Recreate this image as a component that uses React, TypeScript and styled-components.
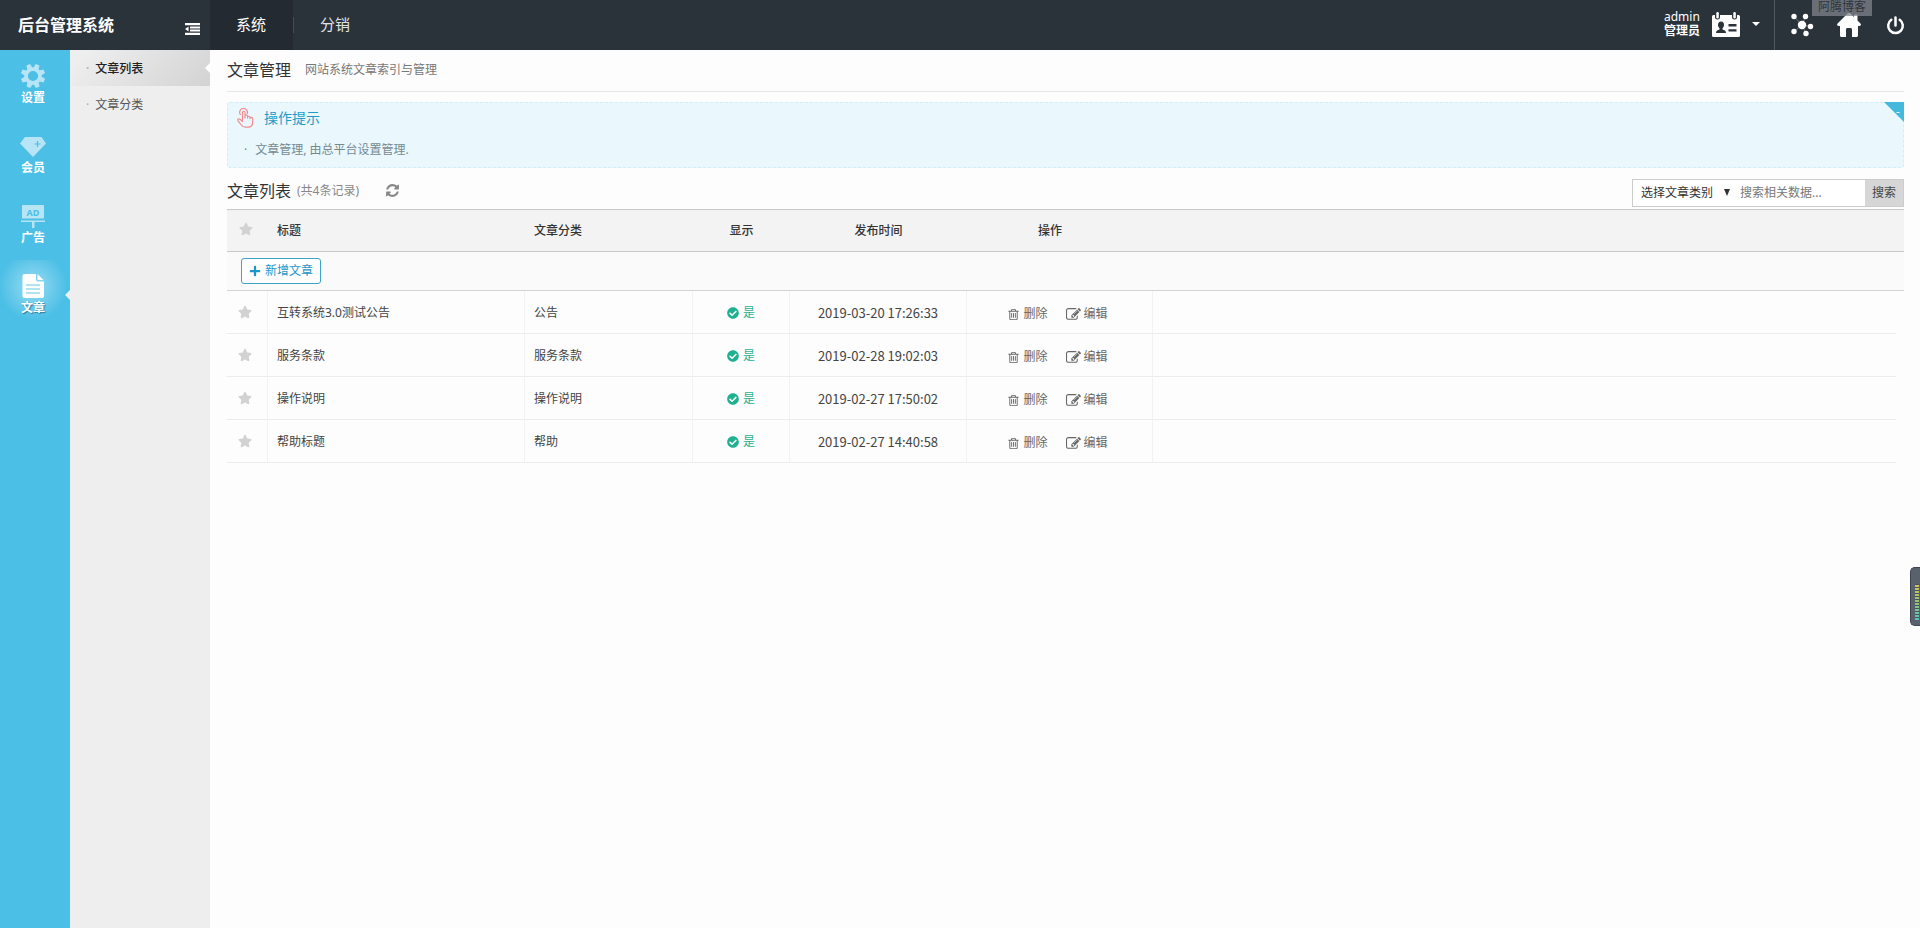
import React from 'react';
import styled, { createGlobalStyle, css } from 'styled-components';
import { FaCheckCircle, FaPlus, FaStar } from 'react-icons/fa';

const GlobalStyle = createGlobalStyle`
  * { box-sizing: border-box; }
  body {
    margin: 0;
    background: #fdfdfd;
    color: #444;
    font: 12px/20px "Noto Sans", "Noto Sans CJK SC", sans-serif;
  }
  button, input, select { font: inherit; color: inherit; margin: 0; }
  button { cursor: pointer; border: 0; background: none; padding: 0; }
  a { color: inherit; text-decoration: none; }
  h1, h2, h3, ul, p { margin: 0; padding: 0; font-weight: 400; list-style: none; }
  svg { display: block; flex: none; }
`;

const Page = styled.div`
  display: flex;
  flex-direction: column;
  min-height: 100vh;
`;

const Header = styled.header`
  display: flex;
  height: 50px;
  background: #2a323a;
  color: #fff;
`;

const Brand = styled.div`
  display: flex;
  align-items: center;
  justify-content: space-between;
  width: 210px;
  padding: 0 10px 0 18px;
`;

const BrandName = styled.h1`
  font-size: 16px;
  font-weight: 700;
  line-height: 48px;
`;

const FoldButton = styled.button`
  padding-top: 8px;
`;

const TopNav = styled.nav`
  display: flex;
  flex: 1;
`;

const TopTab = styled.a<{ $active?: boolean }>`
  display: flex;
  align-items: center;
  padding: 0 27px 2px 26px;
  font-size: 15px;
  color: ${p => (p.$active ? '#fff' : '#e2e4e6')};
  background: ${p => (p.$active ? '#232a31' : 'transparent')};
`;

const TabDivider = styled.span`
  align-self: center;
  width: 1px;
  height: 16px;
  background: #454c54;
`;

const Account = styled.button`
  display: flex;
  align-items: center;
  gap: 12px;
  padding: 0 14px 2px 0;
  border-right: 1px solid #50575f;
  text-align: left;
`;

const AccountName = styled.span`
  display: flex;
  flex-direction: column;
  line-height: 14px;
  strong { font-weight: 700; }
`;

const HeaderTools = styled.div`
  position: relative;
  display: flex;
  padding: 0 1px 0 3px;
`;

const ToolButton = styled.button`
  display: flex;
  align-items: center;
  justify-content: center;
  width: 47px;
`;

const Tooltip = styled.span`
  position: absolute;
  top: 0;
  right: 48px;
  width: 60px;
  height: 16px;
  text-align: center;
  line-height: 14px;
  color: #2f353d;
  background: rgba(128, 132, 140, 0.75);
`;

const Body = styled.div`
  display: flex;
  flex: 1;
`;

const Rail = styled.nav`
  width: 70px;
  background: #4cbfe6;
`;

const RailItem = styled.a<{ $active?: boolean }>`
  position: relative;
  display: flex;
  flex-direction: column;
  align-items: center;
  height: 70px;
  padding: 13px 4px 0 0;
  color: #fff;
  font-weight: 700;
  line-height: 18px;
  svg { opacity: 0.6; }
  ${p =>
    p.$active &&
    css`
      background: radial-gradient(circle at 33px 26px, #9adcf2 0, #4cbfe6 34px);
      svg { opacity: 1; }
      text-shadow: 1px 1px 1px #2b7d99;
      &::after {
        content: '';
        position: absolute;
        right: 0;
        top: 30px;
        border: 5px solid transparent;
        border-left: 0;
        border-right-color: #eee;
      }
    `}
`;

const SubNav = styled.nav`
  width: 140px;
  background: #eee;
`;

const SubItem = styled.a<{ $active?: boolean }>`
  position: relative;
  display: flex;
  gap: 6px;
  height: 36px;
  padding-left: 16px;
  line-height: 38px;
  color: ${p => (p.$active ? '#222' : '#555')};
  font-weight: ${p => (p.$active ? 500 : 400)};
  &::before { content: '·'; color: #aaa; }
  ${p =>
    p.$active &&
    css`
      background: linear-gradient(135deg, #eee 10%, #d4d3d4 100%);
      &::after {
        content: '';
        position: absolute;
        right: 0;
        top: 13px;
        border: 5px solid transparent;
        border-left: 0;
        border-right-color: #fff;
      }
    `}
`;

const Main = styled.main`
  flex: 1;
  min-width: 0;
  padding: 0 16px 0 17px;
`;

const TitleBar = styled.div`
  display: flex;
  align-items: center;
  gap: 14px;
  height: 42px;
  padding-bottom: 2px;
  border-bottom: 1px solid #e6e6e6;
  h2 { font-size: 16px; color: #333; line-height: 36px; }
  p { color: #777; }
`;

const Tips = styled.section`
  position: relative;
  margin-top: 10px;
  height: 66px;
  padding: 5px 8px;
  border: 1px dashed #d3ecf5;
  border-radius: 3px;
  background: #eaf7fd;
`;

const TipsTitle = styled.h3`
  display: flex;
  align-items: center;
  gap: 10px;
  font-size: 14px;
  color: #1d9cc7;
`;

const TipsList = styled.ul`
  margin-top: 12px;
  padding-left: 8px;
  color: #748a91;
  li { display: flex; gap: 8px; }
  li::before { content: '·'; }
`;

const CollapseButton = styled.button`
  position: absolute;
  top: -1px;
  right: -1px;
  width: 20px;
  height: 20px;
  padding-left: 8px;
  color: #fff;
  line-height: 8px;
  background: #45b9dd;
  clip-path: polygon(0 0, 100% 0, 100% 100%);
`;

const ListBar = styled.div`
  display: flex;
  align-items: center;
  height: 41px;
  padding-top: 4px;
`;

const ListTitle = styled.h2`
  font-size: 16px;
  color: #333;
  padding-right: 6px;
`;

const Count = styled.span`
  color: #888;
  padding-right: 26px;
`;

const IconButton = styled.button`
  color: #888;
`;

const Search = styled.form`
  display: flex;
  height: 28px;
  margin: 4px 0 0 auto;
  border: 1px solid #ccc;
  background: #fff;
`;

const SelectBox = styled.label`
  position: relative;
  display: flex;
  select {
    appearance: none;
    width: 99px;
    padding: 0 0 0 8px;
    border: 0;
    background: none;
    color: #333;
  }
  svg { position: absolute; right: 2px; top: 9px; pointer-events: none; }
`;

const SearchInput = styled.input`
  width: 133px;
  padding: 0 8px;
  border: 0;
  background: none;
  &::placeholder { color: #777; opacity: 1; }
`;

const SearchButton = styled.button`
  width: 38px;
  background: #d6d6d6;
  color: #444;
`;

const Table = styled.table`
  width: 100%;
  table-layout: fixed;
  border-collapse: separate;
  border-spacing: 0;
  border-top: 1px solid #c8c8c8;
`;

const HeadCell = styled.th<{ $center?: boolean }>`
  height: 42px;
  padding: 0 9px;
  font-weight: 500;
  color: #333;
  text-align: ${p => (p.$center ? 'center' : 'left')};
  background: #f3f3f3;
  border-bottom: 1px solid #c8c8c8;
`;

const ActionHeadCell = styled(HeadCell)`
  padding-right: 29px;
`;

const ToolbarCell = styled.td`
  height: 39px;
  padding: 0 14px;
  background: #fafafa;
  border-bottom: 1px solid #d4d4d4;
`;

const AddButton = styled.button`
  display: flex;
  align-items: center;
  gap: 4px;
  height: 26px;
  padding: 0 7px;
  border: 1px solid #3fa3c8;
  border-radius: 3px;
  background: #fff;
  color: #1d96c8;
`;

const Cell = styled.td<{ $center?: boolean; $last?: boolean }>`
  height: 43px;
  padding: 2px 9px 0;
  text-align: ${p => (p.$center ? 'center' : 'left')};
  border-bottom: 1px solid #ececec;
  border-right: ${p => (p.$last ? '0' : '1px solid #f2f2f2')};
`;

const DateCell = styled(Cell)`
  font-family: "Noto Sans CJK SC", sans-serif;
  font-size: 13px;
`;

const EdgeCell = styled.td``;

const StarWrap = styled.span`
  display: flex;
  justify-content: center;
  color: #d2d2d2;
  padding: 0 4px 3px 0;
`;

const Status = styled.span`
  display: flex;
  align-items: center;
  justify-content: center;
  gap: 4px;
  color: #1fb08f;
`;

const Actions = styled.div`
  display: flex;
  align-items: center;
  justify-content: center;
  gap: 18px;
  padding: 2px 4px 0 0;
`;

const ActionButton = styled.button`
  display: flex;
  align-items: center;
  gap: 3px;
  color: #666;
`;

const MeterWidget = styled.aside`
  position: fixed;
  right: 0;
  top: 567px;
  width: 10px;
  height: 59px;
  padding: 16px 1px 5px 4px;
  border: 1px solid #3f4450;
  border-right: 0;
  border-radius: 5px 0 0 5px;
  background: #59616d;
`;

const MeterBars = styled.div`
  height: 100%;
  background:
    repeating-linear-gradient(#4a525e 0 1px, transparent 1px 3px),
    linear-gradient(#d8c25c, #9cc46a 45%, #56c3c0);
`;

const FoldIcon = () => (
  <svg width="15" height="12" viewBox="0 0 15 12" fill="#fff" aria-hidden="true">
    <path d="M0 0h15v2.200H0zM5 3.400h10v2H5zM5 6.600h10v2H5zM0 9.800h15V12H0zM0 6l3.600-2.600v5.200z" />
  </svg>
);

const IdCardIcon = () => (
  <svg width="28" height="25" viewBox="0 0 28 25" aria-hidden="true">
    <path fill="#fff" d="M1.500 3H3v2a2.500 2.500 0 0 0 5 0V3h12v2a2.500 2.500 0 0 0 5 0V3h1.500A1.500 1.500 0 0 1 28 4.500v19a1.500 1.500 0 0 1-1.500 1.500h-25A1.500 1.500 0 0 1 0 23.500v-19A1.500 1.500 0 0 1 1.500 3z" />
    <rect x="4.300" width="2.500" height="6.500" rx="1.200" fill="#fff" />
    <rect x="21.300" width="2.500" height="6.500" rx="1.200" fill="#fff" />
    <path fill="#2a323a" d="M9 9.500c2 0 3 1.400 3 3.300 0 1.500-.6 2.600-1.500 3.400v1.300c1.800.6 3.500 1.200 3.500 3.500H4c0-2.300 1.700-2.900 3.500-3.500v-1.300C6.600 15.400 6 14.300 6 12.800c0-1.900 1-3.300 3-3.300zM16.500 12h8v2.400h-8zM16.500 17.200h8v2.400h-8z" />
  </svg>
);

const CaretIcon = () => (
  <svg width="8" height="4" viewBox="0 0 8 4" fill="#fff" aria-hidden="true">
    <path d="M0 0h8L4 4z" />
  </svg>
);

const NodesIcon = () => (
  <svg width="24" height="24" viewBox="0 0 24 24" fill="#fff" stroke="#fff" aria-hidden="true">
    <g stroke="none">
      <circle cx="12" cy="12" r="4.200" />
      <circle cx="4" cy="3.500" r="2.700" />
      <circle cx="15.500" cy="3.500" r="2.700" />
      <circle cx="20.500" cy="13.500" r="2.700" />
      <circle cx="4" cy="18.500" r="2.700" />
      <circle cx="16" cy="20.500" r="2.700" />
    </g>
    <path d="M12 12 15.500 3.500M12 12l8.500 1.500M12 12l-8 6.500M12 12l4 8.500M12 12 4 3.500" strokeWidth="0.700" opacity="0.500" />
  </svg>
);

const HomeIcon = () => (
  <svg width="24" height="24" viewBox="0 0 24 24" fill="#fff" aria-hidden="true">
    <path d="M12 0c.6 0 1.100.2 1.500.6L17 4V2.500c0-.6.4-1 1-1h1.500c.6 0 1 .4 1 1v5l2.900 2.900c1 1 .5 2.600-.9 2.600H21v9.500c0 .8-.7 1.500-1.500 1.500H15v-7.500c0-.8-.6-1.500-1.500-1.500h-3c-.9 0-1.500.7-1.500 1.500V24H4.500C3.700 24 3 23.300 3 22.500V13H1.500c-1.400 0-1.900-1.600-.9-2.600L10.500.6c.4-.4.900-.6 1.500-.6z" />
  </svg>
);

const PowerIcon = () => (
  <svg width="19" height="19" viewBox="0 0 19 19" fill="none" stroke="#fff" strokeWidth="2.500" strokeLinecap="round" aria-hidden="true">
    <path d="M9.500 1.500v8M5.300 3.800a7.300 7.300 0 1 0 8.400 0" />
  </svg>
);

const GearIcon = () => (
  <svg width="26" height="26" viewBox="0 0 26 26" fill="#fff" aria-hidden="true">
    {[0, 45, 90, 135, 180, 225, 270, 315].map(a => (
      <path key={a} d="M10.300 5.500 11 .8h4l.7 4.700z" transform={`rotate(${a + 22} 13 13)`} />
    ))}
    <circle cx="13" cy="13" r="6.900" fill="none" stroke="#fff" strokeWidth="3.600" />
  </svg>
);

const DiamondIcon = () => (
  <svg width="26" height="26" viewBox="0 0 26 26" aria-hidden="true">
    <path fill="#fff" d="M5 4h16.500L26 10.500 13 24 0 10.500z" />
    <path fill="none" stroke="#4cbfe6" strokeWidth="1.200" d="M17.500 8v6M14.500 11h6" />
  </svg>
);

const BoardIcon = () => (
  <svg width="24" height="26" viewBox="0 0 24 26" fill="#fff" aria-hidden="true">
    <path d="M2 2h20a1 1 0 0 1 1 1v12.500H1V3a1 1 0 0 1 1-1zM0 17.500h24V19H0zM11 19h2.500v6H11z" />
    <text x="12" y="12.500" fontSize="9" fontWeight="700" textAnchor="middle" fill="#4cbfe6">AD</text>
  </svg>
);

const DocIcon = () => (
  <svg width="22" height="26" viewBox="0 0 22 26" aria-hidden="true">
    <path fill="#fff" d="M2.500 1H14v5.500c0 1.200.8 2 2 2h6V23a2 2 0 0 1-2 2H2.500a2 2 0 0 1-2-2V3a2 2 0 0 1 2-2zM15.500 1l6 6h-5a1 1 0 0 1-1-1z" />
    <path stroke="#64c7e8" strokeWidth="1.200" d="M4 12h14M4 16h14M4 20h14" />
  </svg>
);

const HandIcon = () => (
  <svg width="18" height="20" viewBox="0 0 18 20" fill="none" stroke="#ef8b90" strokeWidth="1.200" strokeLinecap="round" strokeLinejoin="round" aria-hidden="true">
    <path d="M6.500 12V4.500a1.200 1.200 0 0 1 2.500 0V10M9 9.500V8a1.200 1.200 0 0 1 2.500.200V10M11.500 9.500a1.200 1.200 0 0 1 2.500 0v1M14 10.500a1.200 1.200 0 0 1 2.700.300V14c0 3.500-2 5.200-4.700 5.200H9.500c-2 0-3.200-.8-4.200-2.200L2 12.800c-1-1.600.8-2.500 2-1.500l2.500 2.200" />
    <path d="M4.300 6.500a3.900 3.900 0 1 1 7-1" />
  </svg>
);

const AwesomeIcon = ({ d, size }: { d: string; size: number }) => (
  <svg width={size} height={size} viewBox="0 0 1792 1792" fill="currentColor" aria-hidden="true">
    <path d={d} />
  </svg>
);

const TRASH =
  'M704 736v576q0 14-9 23t-23 9h-64q-14 0-23-9t-9-23v-576q0-14 9-23t23-9h64q14 0 23 9t9 23zm256 0v576q0 14-9 23t-23 9h-64q-14 0-23-9t-9-23v-576q0-14 9-23t23-9h64q14 0 23 9t9 23zm256 0v576q0 14-9 23t-23 9h-64q-14 0-23-9t-9-23v-576q0-14 9-23t23-9h64q14 0 23 9t9 23zm128 724v-948h-896v948q0 22 7 40.500t14.500 27 10.500 8.500h832q3 0 10.500-8.500t14.500-27 7-40.500zm-672-1076h448l-48-117q-7-9-17-11h-317q-10 2-17 11zm928 32v64q0 14-9 23t-23 9h-96v948q0 83-47 143.500t-113 60.500h-832q-66 0-113-58.500t-47-141.500v-952h-96q-14 0-23-9t-9-23v-64q0-14 9-23t23-9h309l70-167q15-37 54-63t79-26h320q40 0 79 26t54 63l70 167h309q14 0 23 9t9 23z';
const EDIT =
  'M888 1184l116-116-152-152-116 116v56h96v96h56zm440-720q-16-16-33 1l-350 350q-17 17-1 33t33-1l350-350q17-17 1-33zm80 594v190q0 119-84.500 203.500t-203.500 84.500h-832q-119 0-203.500-84.500t-84.500-203.500v-832q0-119 84.500-203.500t203.500-84.500h832q63 0 117 25 15 7 18 23 3 17-9 29l-49 49q-14 14-32 8-23-6-45-6h-832q-66 0-113 47t-47 113v832q0 66 47 113t113 47h832q66 0 113-47t47-113v-126q0-13 9-22l64-64q15-15 35-7t20 29zm-96-738l288 288-672 672h-288v-288zm444 132l-92 92-288-288 92-92q28-28 68-28t68 28l152 152q28 28 28 68t-28 68z';
const REFRESH =
  'M1639 1056q0 5-1 7-64 268-268 434.500t-478 166.500q-146 0-282.500-55t-243.500-157l-129 129q-19 19-45 19t-45-19-19-45v-448q0-26 19-45t45-19h448q26 0 45 19t19 45-19 45l-137 137q71 66 161 102t187 36q134 0 250-65t186-179q11-17 53-117 8-23 30-23h192q13 0 22.500 9.500t9.500 22.500zm25-800v448q0 26-19 45t-45 19h-448q-26 0-45-19t-19-45 19-45l138-138q-148-137-349-137-134 0-250 65t-186 179q-11 17-53 117-8 23-30 23h-199q-13 0-22.500-9.500t-9.500-22.500v-7q65-268 270-434.500t480-166.500q146 0 284 55.500t245 156.500l130-129q19-19 45-19t45 19 19 45z';

const railItems = [
  { label: '设置', icon: <GearIcon /> },
  { label: '会员', icon: <DiamondIcon /> },
  { label: '广告', icon: <BoardIcon /> },
  { label: '文章', icon: <DocIcon />, active: true },
];

const articles = [
  { title: '互转系统3.0测试公告', category: '公告', time: '2019-03-20 17:26:33' },
  { title: '服务条款', category: '服务条款', time: '2019-02-28 19:02:03' },
  { title: '操作说明', category: '操作说明', time: '2019-02-27 17:50:02' },
  { title: '帮助标题', category: '帮助', time: '2019-02-27 14:40:58' },
];

export default function App() {
  return (
    <Page>
      <GlobalStyle />
      <Header>
        <Brand>
          <BrandName>后台管理系统</BrandName>
          <FoldButton aria-label="收起菜单"><FoldIcon /></FoldButton>
        </Brand>
        <TopNav>
          <TopTab href="#system" $active>系统</TopTab>
          <TabDivider />
          <TopTab href="#sales">分销</TopTab>
        </TopNav>
        <Account>
          <AccountName>
            <span>admin</span>
            <strong>管理员</strong>
          </AccountName>
          <IdCardIcon />
          <CaretIcon />
        </Account>
        <HeaderTools>
          <ToolButton aria-label="导航"><NodesIcon /></ToolButton>
          <ToolButton aria-label="首页"><HomeIcon /></ToolButton>
          <ToolButton aria-label="退出"><PowerIcon /></ToolButton>
          <Tooltip>阿腾博客</Tooltip>
        </HeaderTools>
      </Header>
      <Body>
        <Rail>
          {railItems.map(item => (
            <RailItem key={item.label} href="#module" $active={item.active}>
              {item.icon}
              {item.label}
            </RailItem>
          ))}
        </Rail>
        <SubNav>
          <SubItem href="#list" $active>文章列表</SubItem>
          <SubItem href="#category">文章分类</SubItem>
        </SubNav>
        <Main>
          <TitleBar>
            <h2>文章管理</h2>
            <p>网站系统文章索引与管理</p>
          </TitleBar>
          <Tips>
            <TipsTitle><HandIcon />操作提示</TipsTitle>
            <TipsList>
              <li>文章管理, 由总平台设置管理.</li>
            </TipsList>
            <CollapseButton aria-label="收起提示">-</CollapseButton>
          </Tips>
          <ListBar>
            <ListTitle>文章列表</ListTitle>
            <Count>(共4条记录)</Count>
            <IconButton aria-label="刷新"><AwesomeIcon d={REFRESH} size={15} /></IconButton>
            <Search onSubmit={e => e.preventDefault()}>
              <SelectBox>
                <select aria-label="文章类别">
                  <option>选择文章类别</option>
                </select>
                <svg width="6" height="7" viewBox="0 0 6 7" fill="#333" aria-hidden="true">
                  <path d="M0 0h6L3 7z" />
                </svg>
              </SelectBox>
              <SearchInput type="text" aria-label="搜索" placeholder="搜索相关数据..." />
              <SearchButton type="submit">搜索</SearchButton>
            </Search>
          </ListBar>
          <Table>
            <colgroup>
              <col width="41" />
              <col width="257" />
              <col width="168" />
              <col width="97" />
              <col width="177" />
              <col width="186" />
              <col />
              <col width="8" />
            </colgroup>
            <thead>
              <tr>
                <HeadCell aria-label="标记"><StarWrap><FaStar size={14} /></StarWrap></HeadCell>
                <HeadCell>标题</HeadCell>
                <HeadCell>文章分类</HeadCell>
                <HeadCell $center>显示</HeadCell>
                <HeadCell $center>发布时间</HeadCell>
                <ActionHeadCell $center>操作</ActionHeadCell>
                <HeadCell as="td" colSpan={2} />
              </tr>
            </thead>
            <tbody>
              <tr>
                <ToolbarCell colSpan={8}>
                  <AddButton><FaPlus size={12} />新增文章</AddButton>
                </ToolbarCell>
              </tr>
              {articles.map(a => (
                <tr key={a.title}>
                  <Cell><StarWrap><FaStar size={14} /></StarWrap></Cell>
                  <Cell>{a.title}</Cell>
                  <Cell>{a.category}</Cell>
                  <Cell $center><Status><FaCheckCircle size={12} />是</Status></Cell>
                  <DateCell $center>{a.time}</DateCell>
                  <Cell $center>
                    <Actions>
                      <ActionButton><AwesomeIcon d={TRASH} size={13} />删除</ActionButton>
                      <ActionButton><AwesomeIcon d={EDIT} size={15} />编辑</ActionButton>
                    </Actions>
                  </Cell>
                  <Cell $last />
                  <EdgeCell />
                </tr>
              ))}
            </tbody>
          </Table>
        </Main>
      </Body>
      <MeterWidget aria-hidden="true"><MeterBars /></MeterWidget>
    </Page>
  );
}
